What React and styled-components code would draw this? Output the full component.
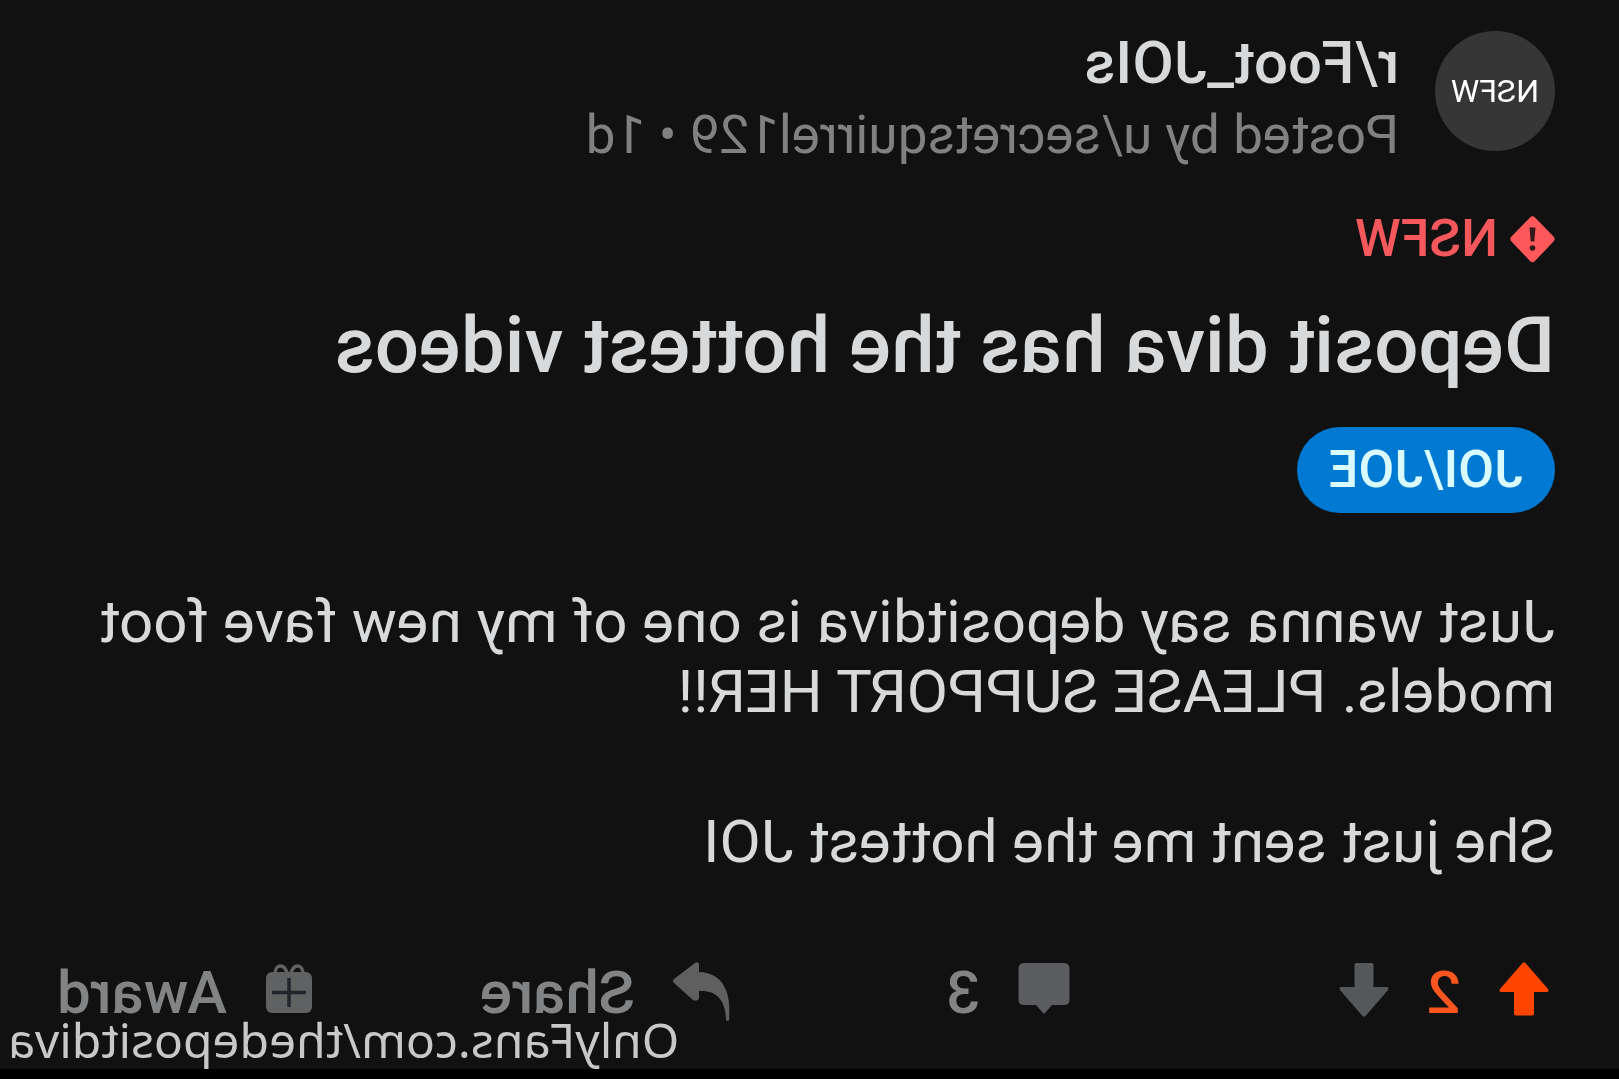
import React from 'react'
import styled, { createGlobalStyle } from 'styled-components'

function App() {
    return (
        <>
            <GlobalStyle />
            <Page>
                <Post>
                    <Header>
                        <Avatar>NSFW</Avatar>
                        <div>
                            <Subreddit href="#subreddit">r/Foot_JOIs</Subreddit>
                            <Byline>Posted by u/secretsquirrel129 • 1d</Byline>
                        </div>
                    </Header>
                    <Warning>
                        <svg width="45" height="48" viewBox="0 0 45 48" aria-hidden="true">
                            <path d="M20 2.5 Q22.5 0 25 2.5 L43.5 21.500 Q46 24 43.500 26.500 L25 46 Q22.500 48.500 20 46 L1.500 26.500 Q-1 24 1.500 21.500 Z" fill="#ff585b" />
                            <path d="M19.500 12.500 h6 l-1.200 14 h-3.600 z" fill="#33191b" />
                            <circle cx="22.500" cy="33" r="2.800" fill="#33191b" />
                        </svg>
                        NSFW
                    </Warning>
                    <Title>Deposit diva has the hottest videos</Title>
                    <Flair href="#flair">JOI/JOE</Flair>
                    <Body>
                        <p>Just wanna say depositdiva is one of my new fave foot models. PLEASE SUPPORT HER!!</p>
                        <p>She just sent me the hottest JOI</p>
                    </Body>
                    <Actions>
                        <Votes>
                            <IconButton aria-label="Upvote">
                                <svg width="50" height="54" viewBox="0 0 50 54">
                                    <path d="M23.500 1 Q25 -0.500 26.500 1 L49 27 Q50.500 30 47.500 30 H35 V51.500 Q35 53.500 33 53.500 H17 Q15 53.500 15 51.500 V30 H2.500 Q-0.500 30 1 27 Z" fill="#ff4500" />
                                </svg>
                            </IconButton>
                            <Score>2</Score>
                            <IconButton aria-label="Downvote">
                                <svg width="50" height="56" viewBox="0 0 50 56">
                                    <path d="M26.500 54 Q25 55.500 23.500 54 L1 28 Q-0.500 25 2.500 25 H15.500 V3 Q15.500 1 17.500 1 H32.500 Q34.500 1 34.500 3 V25 H47.500 Q50.500 25 49 28 Z" fill="#55585a" />
                                </svg>
                            </IconButton>
                        </Votes>
                        <ActionButton>
                            <svg width="52" height="54" viewBox="0 0 52 54" aria-hidden="true">
                                <path d="M6 1 H46 Q51.500 1 51.500 7 V38 Q51.500 43 46 43 H34 L26 52 L18 43 H6 Q0.500 43 0.500 38 V7 Q0.500 1 6 1 Z" fill="#5b5d60" />
                            </svg>
                            3
                        </ActionButton>
                        <ActionButton>
                            <svg width="57" height="60" viewBox="0 0 57 60" aria-hidden="true">
                                <path d="M1 58 C-1 33 5 11 31 10 V2 Q32 -1 35 1 L56 17 Q58 19 56 21 L37 38 Q32 40 31 36 V29 C14 28 5 37 4 58 Q2 60 1 58 Z" fill="#5f5f5f" />
                            </svg>
                            Share
                        </ActionButton>
                        <ActionButton>
                            <svg width="48" height="54" viewBox="0 0 48 54" aria-hidden="true">
                                <rect x="1" y="10" width="46" height="41" rx="6" fill="#606163" />
                                <path d="M10 12 C10 2 19 1 22 11 M26 11 C29 1 38 2 38 12" fill="none" stroke="#606163" strokeWidth="3.500" />
                                <path d="M24 16 V45 M7 30.500 H41" stroke="#20262b" strokeWidth="3.500" />
                            </svg>
                            Award
                        </ActionButton>
                    </Actions>
                </Post>
                <Watermark>OnlyFans.com/thedepositdiva</Watermark>
            </Page>
        </>
    )
}

const GlobalStyle = createGlobalStyle`
 * {
     box-sizing : border-box;
 }
 body {
     margin : 0;
     background : #000000;
 }
 p, h1 {
     margin : 0;
 }
`
/* the whole post is shown as a mirror image */
const Page = styled.main`
 position : relative;
 transform : scaleX(-1);
 font-family : Roboto, "Liberation Sans", sans-serif;
 color : #d7d9db;
`
const Post = styled.article`
 display : flex;
 flex-direction : column;
 align-items : flex-start;
 padding : 31px 48px 45px 64px;
 background : #111111;
`
const Header = styled.header`
 display : flex;
 align-items : flex-start;
 gap : 36px;
`
const Avatar = styled.div`
 display : flex;
 align-items : center;
 justify-content : center;
 width : 120px;
 height : 120px;
 border-radius : 50%;
 background : #363636;
 color : #ffffff;
 font-size : 32px;
`
const Subreddit = styled.a`
 display : block;
 font-size : 60px;
 font-weight : 500;
 line-height : 64px;
 color : inherit;
 text-decoration : none;
`
const Byline = styled.p`
 margin-top : 8px;
 font-size : 53px;
 line-height : 64px;
 color : #818181;
`
const Warning = styled.div`
 display : flex;
 align-items : center;
 gap : 12px;
 margin-top : 36px;
 font-size : 52px;
 font-weight : 500;
 line-height : 72px;
 color : #f4585c;
`
const Title = styled.h1`
 margin-top : 23px;
 font-size : 78px;
 font-weight : 500;
 line-height : 96px;
`
const Flair = styled.a`
 margin-top : 33px;
 padding : 8px 32px;
 border-radius : 44px;
 background : #0079d3;
 color : #d9fbff;
 font-size : 52px;
 font-weight : 500;
 line-height : 70px;
 text-decoration : none;
`
const Body = styled.div`
 display : flex;
 flex-direction : column;
 gap : 80px;
 margin-top : 74px;
 font-size : 60px;
 line-height : 70px;
`
const Actions = styled.div`
 display : grid;
 grid-template-columns : 485fr 340fr 417fr 265fr;
 align-self : stretch;
 margin-top : 85px;
 font-size : 60px;
 font-weight : 500;
 line-height : 62px;
 color : #818384;
`
const Votes = styled.div`
 display : flex;
 align-items : flex-start;
 gap : 38px;
 padding-left : 6px;
`
const IconButton = styled.button`
 display : flex;
 padding : 0;
 border : 0;
 background : none;
 cursor : pointer;
`
const Score = styled.span`
 color : #f9551f;
`
const ActionButton = styled(IconButton)`
 align-items : flex-start;
 gap : 38px;
 font : inherit;
 color : inherit;
`
const Watermark = styled.div`
 position : absolute;
 right : 8px;
 bottom : 0;
 font-family : "Noto Sans", "Open Sans", sans-serif;
 font-size : 48px;
 line-height : 58px;
 color : #c8c8c8;
`
export default App
